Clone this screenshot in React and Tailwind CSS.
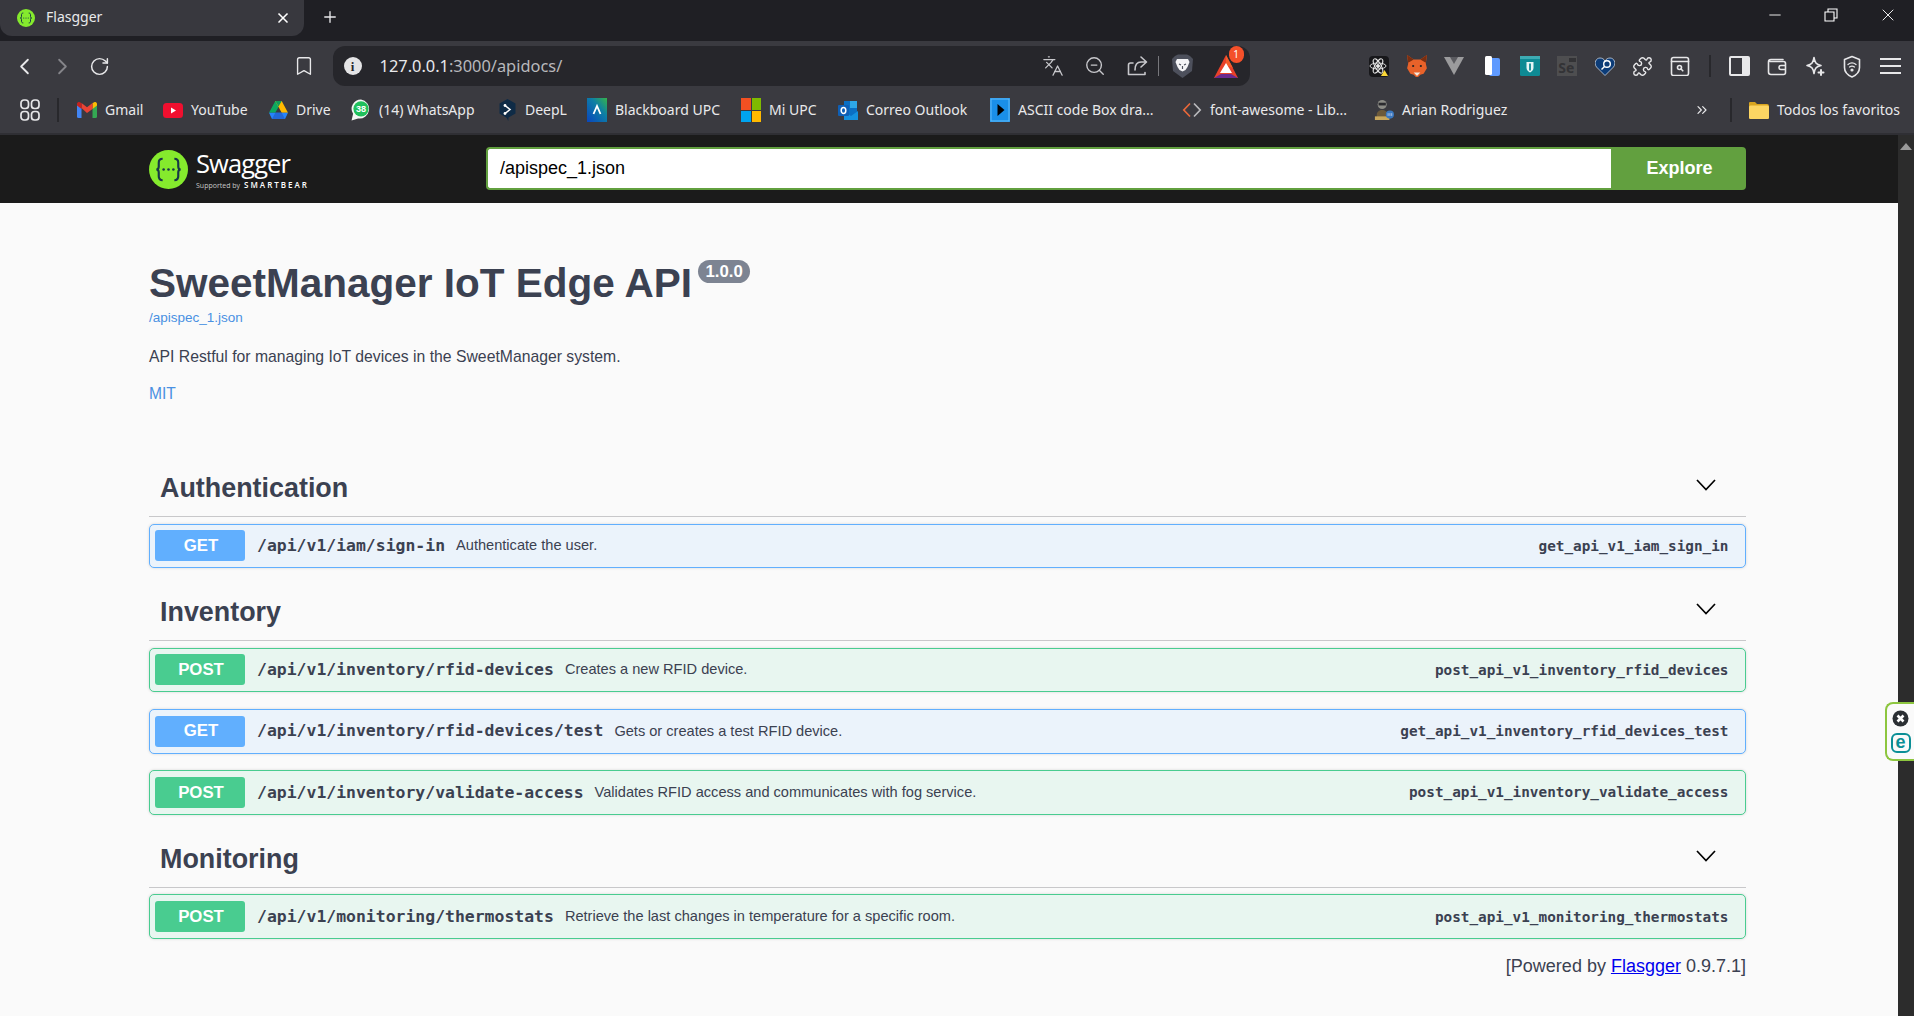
import React from "react";
import { ChevronLeft, ChevronRight, RotateCw, Bookmark, Languages, ZoomOut, Puzzle, X, Plus, Minus, ChevronsRight } from "lucide-react";

const Gmail = () => (<svg width="20" height="16" viewBox="0 0 20 16" fill="none"><path d="M0 2v12.5A1.5 1.5 0 0 0 1.5 16H4.500V6z" fill="#4285f4"/><path d="M20 2v12.500A1.500 1.500 0 0 1 18.500 16H15.500V6z" fill="#34a853"/><path d="M15.500 1v6l4.500-3.500V2c0-1.800-2-2.600-3.200-1.600z" fill="#fbbc04"/><path d="M4.500 6V1L10 5.200 15.500 1v6L10 11z" fill="#ea4335"/><path d="M0 2v1.500L4.500 7V1L3.200.4C2-.6 0 .2 0 2z" fill="#c5221f"/></svg>);
const YouTube = () => (<svg width="20" height="15" viewBox="0 0 20 15"><rect width="20" height="15" rx="3.500" fill="#f00f2f"/><path d="M8 4.500v6l5-3z" fill="#fff"/></svg>);
const Drive = () => (<svg width="19" height="18" viewBox="0 0 19 18"><path d="M6.300 0h6.400l-3.100 5.800-3.300 6H0z" fill="#0da960"/><path d="M6.300 0h6.400l6.300 11.800h-6.300z" fill="#ffba00"/><path d="M3 18h13l3-6.200H0z" fill="#2684fc"/><path d="M6.300 11.800h6.400L16 18H3z" fill="#2268d8"/><path d="M6.300 0h6.400L9.500 5.600z" fill="#0f9d58"/></svg>);
const WhatsApp = () => (<svg width="21" height="24" viewBox="0 0 21 24"><path d="M10.500 1a9.800 9.800 0 0 0-8.300 15L.6 23l6.800-2.200A9.800 9.800 0 1 0 10.500 1z" fill="#f4f6f4"/><circle cx="10.500" cy="10.800" r="8" fill="#20c05c"/><text x="10.500" y="14" textAnchor="middle" fontSize="9.500" fontWeight="700" fill="#fff" fontFamily="Liberation Sans, sans-serif">38</text></svg>);
const DeepL = () => (<svg width="17" height="22" viewBox="0 0 17 22"><path d="M8.500 0l8 4.500v10l-7 4-.2 3.500-1.800-3.300-7-4.200v-10z" fill="#0f2b46"/><path d="M6 6.500l5 4-5 4" fill="none" stroke="#fff" strokeWidth="1.600"/><circle cx="6" cy="6.500" r="1.400" fill="#fff"/><circle cx="6" cy="14.500" r="1.400" fill="#fff"/></svg>);
const Blackboard = () => (<svg width="20" height="24" viewBox="0 0 20 24"><defs><linearGradient id="bb" x1="1" y1="0" x2="0" y2="1"><stop offset="0" stopColor="#36b34a"/><stop offset="0.4" stopColor="#0d7fa5"/><stop offset="1" stopColor="#0a45bd"/></linearGradient></defs><rect width="20" height="24" fill="url(#bb)"/><path d="M6.500 16l3.500-8 3.500 8" fill="none" stroke="#fff" strokeWidth="1.800"/></svg>);
const MS = () => (<div className="grid w-[20px] h-[24px] grid-cols-2 grid-rows-2 gap-[1px]"><div className="bg-[#f25022]"/><div className="bg-[#7fba00]"/><div className="bg-[#00a4ef]"/><div className="bg-[#ffb900]"/></div>);
const Outlook = () => (<svg width="20" height="21" viewBox="0 0 20 21"><rect x="6" y="1" width="13" height="15" fill="#0a6fc4"/><rect x="12" y="1" width="7" height="7" fill="#2ea8e8"/><path d="M6 11l7 5 7-5v9H6z" fill="#1490df"/><rect y="5" width="11" height="11" rx="1" fill="#0f5fb5"/><ellipse cx="5.500" cy="10.500" rx="2.300" ry="3" fill="none" stroke="#fff" strokeWidth="1.500"/></svg>);
const Ascii = () => (<svg width="20" height="24" viewBox="0 0 20 24"><rect width="20" height="24" fill="#1a8fe8"/><rect x="1" y="1" width="18" height="22" fill="none" stroke="#62bcf7"/><path d="M7.500 6l7 6-7 6z" fill="#000"/></svg>);
const Fa = () => (<svg width="20" height="16" viewBox="0 0 20 16" fill="none" strokeWidth="1.700"><path d="M8 1.500L1.800 8 8 14.500" stroke="#e8683a"/><path d="M12 1.500L18.200 8 12 14.500" stroke="#b9b9bc"/></svg>);
const Person = () => (<svg width="22" height="24" viewBox="0 0 22 24"><circle cx="9" cy="6" r="5" fill="#8c8c86"/><rect x="5" y="4" width="8" height="3" fill="#2a2a2e"/><path d="M3 23v-6c0-3 3-5 6-5s6 2 6 5v6z" fill="#6d5a3a"/><rect x="1" y="19" width="16" height="4" fill="#c9a75c"/><circle cx="17.500" cy="17" r="4.500" fill="#3a78c0"/><path d="M15.500 15.500v3M17.500 15.500v3M19.500 15.500v3" stroke="#dde" strokeWidth=".8"/></svg>);
const Folder = () => (<svg width="20" height="18" viewBox="0 0 20 18"><path d="M0 2a1 1 0 0 1 1-1h5l2 2h10a2 2 0 0 1 2 2v11a2 2 0 0 1-2 2H2a2 2 0 0 1-2-2z" fill="#d9a520"/><rect y="4.500" width="20" height="13.500" rx="1.500" fill="#fdd663"/></svg>);
const Apps = () => (<svg width="20" height="22" viewBox="0 0 20 22" fill="none" stroke="#e6e6e8" strokeWidth="1.700"><rect x="1" y="1" width="7.500" height="8.500" rx="3"/><rect x="11.500" y="1" width="7.500" height="8.500" rx="3"/><rect x="1" y="12.500" width="7.500" height="8.500" rx="3"/><rect x="11.500" y="12.500" width="7.500" height="8.500" rx="3"/></svg>);

const SwaggerIcon = ({ size = 39 }) => (
  <svg width={size} height={size} viewBox="0 0 40 40">
    <circle cx="20" cy="20" r="20" fill="#85ea2d" />
    <path d="M14 9c-3.500 0-4 2-4 4v4c0 2-1 3-2.500 3 1.500 0 2.500 1 2.500 3v4c0 2 .5 4 4 4M26 9c3.500 0 4 2 4 4v4c0 2 1 3 2.500 3-1.500 0-2.500 1-2.500 3v4c0 2-.5 4-4 4" fill="none" stroke="#173647" strokeWidth="2.200" />
    <circle cx="15" cy="20" r="1.300" fill="#173647" /><circle cx="20" cy="20" r="1.300" fill="#173647" /><circle cx="25" cy="20" r="1.300" fill="#173647" />
  </svg>
);

const Lion = () => (<svg width="21" height="24" viewBox="0 0 21 24"><path d="M3 2l3-1.500h9L18 2l3 3-1 12-9.500 7L1 17 0 5z" fill="#4d505c"/><path d="M5 5h11l1.500 3-2 5-2 3-3 1.500L7.500 16l-2-3-2-5z" fill="#f4f4f6"/><path d="M7 10l2 1M14 10l-2 1M10.500 12v3" stroke="#4d505c" strokeWidth="1.200"/></svg>);
const Triangle = () => (<svg width="24" height="24" viewBox="0 0 24 24"><path d="M12 1L0 24h24z" fill="#e8412a"/><path d="M12 1l7 13-7-3z" fill="#f55d2a"/><path d="M0 24l7-4h10l7 4z" fill="#6a2a8e"/><path d="M12 9l6 10H6z" fill="#fff"/></svg>);

const ReactExt = () => (<div className="relative w-[20px] h-[21px] bg-[#17171a] rounded-sm"><svg width="20" height="21" viewBox="0 0 20 21" fill="none" stroke="#e8e8e8" strokeWidth=".9"><ellipse cx="9" cy="10" rx="8" ry="3"/><ellipse cx="9" cy="10" rx="8" ry="3" transform="rotate(60 9 10)"/><ellipse cx="9" cy="10" rx="8" ry="3" transform="rotate(120 9 10)"/><circle cx="9" cy="10" r="1.500" fill="#e8e8e8"/><path d="M12 20l3.500-6 3.500 6z" fill="#fbd838" stroke="none"/></svg></div>);
const Fox = () => (<svg width="22" height="22" viewBox="0 0 20 20"><path d="M1 0l6 4h6l6-4-1 8 1 4-3 5-3 1-3 3-3-3-3-1-3-5 1-4z" fill="#e8622a"/><path d="M1 0l6 4-5 3zM19 0l-6 4 5 3z" fill="#7a2e10"/><path d="M7 16h6l-3 3z" fill="#f5e8dc"/><circle cx="6.500" cy="10" r="1" fill="#222"/><circle cx="13.500" cy="10" r="1" fill="#222"/></svg>);
const Vue = () => (<svg width="20" height="18" viewBox="0 0 20 18"><path d="M0 0h20L10 18z" fill="#9b9b9d"/><path d="M6 0h8l-4 7z" fill="#5b5b60"/></svg>);
const Files = () => (<svg width="15" height="20" viewBox="0 0 15 20"><rect x="4" y="2" width="11" height="18" rx="2" fill="#5f9aff"/><rect width="7" height="19" rx="1.500" fill="#fff"/></svg>);
const Bitwarden = () => (<svg width="20" height="20" viewBox="0 0 20 20"><rect width="20" height="20" rx="1.500" fill="#0e8a94"/><rect width="20" height="3" fill="#3dabb3"/><path d="M6.500 6h7v6c0 2-2 4-3.500 4.500C8.500 16 6.500 14 6.500 12z" fill="#e6f5f6"/><path d="M10 7.500v7" stroke="#0e8a94" strokeWidth="1.800"/></svg>);
const Selenium = () => (<div className="relative w-[20px] h-[20px] bg-[#4e4e50] text-[#333336] text-[14px] leading-[24px] font-bold pl-[1px] font-['Noto_Sans',sans-serif]">Se<span className="absolute right-[1px] top-[2px] w-[7px] h-[4px] bg-[#333336]"/></div>);
const Heart = () => (<svg width="20" height="19" viewBox="0 0 20 19"><path d="M10 18.500L1.500 10C-1.500 6 1 1 5 1c2 0 4 1 5 3 1-2 3-3 5-3 4 0 6.500 5 3.500 9z" fill="#0c3c78" stroke="#dde6f2" strokeWidth=".7"/><circle cx="12" cy="7" r="3.300" fill="none" stroke="#fff" strokeWidth="1.400"/><path d="M9.500 9.500L6.500 12.500" stroke="#fff" strokeWidth="1.400"/></svg>);
const Stroke = ({ children, w = 20, h = 20 }) => (<svg width={w} height={h} viewBox={`0 0 ${w} ${h}`} fill="none" stroke="#e6e6e8" strokeWidth="1.600" strokeLinecap="round" strokeLinejoin="round">{children}</svg>);

const Ext = ({ children }) => <div className="w-[37.6px] flex justify-center items-center">{children}</div>;
const Nav = ({ children, className = "" }) => <div className={`flex justify-center items-center ${className}`}>{children}</div>;

const Mark = ({ icon, label, className = "" }) => (
  <div className={`flex items-center gap-[8px] shrink-0 ${className}`}>
    <div className="w-[20px] flex justify-center">{icon}</div>
    <span className="text-[14px] whitespace-nowrap text-[#e9e9eb] leading-none">{label}</span>
  </div>
);

const Section = ({ title, children }) => (
  <section className="mt-[14px]">
    <div className="h-[59px] border-b border-b-[#c8c8ca] flex items-center justify-between pl-[11px] pr-[30px]">
      <h3 className="pt-[2px] text-[26.9px] font-bold text-[#3b4151] leading-none">{title}</h3>
      <svg className="mb-[4px]" width="20" height="12" viewBox="0 0 20 12" fill="none" stroke="#000" strokeWidth="1.700"><path d="M1 1l9 9.500L19 1" /></svg>
    </div>
    <div className="pt-[6.5px]">{children}</div>
  </section>
);

const Op = ({ method, path, summary, id }) => {
  const post = method === "POST";
  return (
    <div className={`h-[44.6px] mb-[16.8px] last:mb-0 flex items-center rounded-[5px] border-[1.5px] pl-[5px] pr-[16.5px] shadow-[0_0_3px_rgba(0,0,0,0.15)] ${post ? "bg-[#e8f6f0] border-[#49cc90]" : "bg-[#ebf3fb] border-[#61affe]"}`}>
      <div className={`w-[90px] h-[31px] pl-[2px] pb-[1px] rounded-[3px] flex items-center justify-center text-white font-bold text-[16.8px] ${post ? "bg-[#49cc90]" : "bg-[#61affe]"}`}>{method}</div>
      <span className="ml-[12px] pt-[1px] font-['DejaVu_Sans_Mono',monospace] font-bold text-[16.45px] text-[#3b4151] whitespace-nowrap">{path}</span>
      <span className="ml-[11px] pt-[1px] text-[14.6px] text-[#3b4151] whitespace-nowrap">{summary}</span>
      <span className="ml-auto pt-[1px] font-['DejaVu_Sans_Mono',monospace] font-bold text-[14.35px] text-[#3b4151] whitespace-nowrap">{id}</span>
    </div>
  );
};

export default function App() {
  return (
    <div className="relative w-[1914px] h-[1016px] overflow-hidden bg-[#fafafa] font-['Liberation_Sans',sans-serif]">
      <header className="font-['Noto_Sans',sans-serif]">
        <div className="h-[41px] bg-[#1f1f24] flex">
          <div className="w-[304px] h-[36px] bg-[#38383e] rounded-b-[12px] flex items-center">
            <div className="ml-[17px]"><SwaggerIcon size={18} /></div>
            <span className="ml-[11px] pb-[3px] text-[14px] text-[#e9e9eb] leading-none">Flasgger</span>
            <X className="ml-auto mr-[13px]" size={16} strokeWidth={2.500} color="#fff" />
          </div>
          <Plus className="ml-[17px] mt-[8px]" size={18} strokeWidth={1.800} color="#e8e8ea" />
          <div className="ml-auto flex h-[30px] items-center">
            <Minus size={18} strokeWidth={1.200} color="#fff" />
            <div className="ml-[40px]"><Stroke w={14} h={14}><path d="M1 4h9v9H1zM4 4V1h9v9h-3" strokeWidth="1.100" strokeLinecap="butt" strokeLinejoin="miter" stroke="#fff"/></Stroke></div>
            <X className="ml-[40px] mr-[16px]" size={20} strokeWidth={1.100} color="#fff" />
          </div>
        </div>
        <div className="h-[49px] pt-[1px] bg-[#3a3a40] flex items-center pl-[6px]">
          <Nav className="w-[37.500px]"><ChevronLeft size={27} strokeWidth={1.600} color="#e8e8ea" /></Nav>
          <Nav className="w-[37.500px]"><ChevronRight size={27} strokeWidth={1.600} color="#85858a" /></Nav>
          <Nav className="w-[37.500px]"><RotateCw size={21} strokeWidth={1.700} color="#e8e8ea" /></Nav>
          <Nav className="w-[38px] ml-[166px]"><Bookmark size={22} strokeWidth={1.500} color="#e8e8ea" /></Nav>
          <div className="ml-[10px] w-[917px] h-[40px] rounded-[12px] bg-[#26262b] flex items-center">
            <div className="ml-[11px] w-[18px] h-[18px] rounded-full bg-[#e4e4e6] flex items-center justify-center text-[#26262b] text-[13px] font-bold leading-none font-['Liberation_Serif',serif]">i</div>
            <span className="ml-[18px] text-[16.4px] text-[#e9e9eb] leading-none whitespace-nowrap">127.0.0.1<span className="text-[#b8b8bc]">:3000/apidocs/</span></span>
            <div className="ml-auto flex items-center pr-[5px]">
              <Nav className="w-[42px]"><Languages size={22} strokeWidth={1.400} color="#c8c8cc" /></Nav>
              <Nav className="w-[42px]"><ZoomOut size={22} strokeWidth={1.500} color="#c8c8cc" /></Nav>
              <Nav className="w-[42px]"><Stroke w={22} h={22}><path d="M7 8H4.500A2 2 0 0 0 2.500 10v9.500h16.500v-2M19 7h-4c-4 0-6 3-6 8M15 2l5.500 5-5.500 5" stroke="#c8c8cc"/></Stroke></Nav>
              <div className="w-[1px] h-[20px] bg-[#77777c]" />
              <Nav className="w-[48px]"><Lion /></Nav>
              <div className="relative w-[38px] flex justify-center">
                <Triangle />
                <span className="absolute right-[1px] top-[-8px] w-[15px] h-[17px] rounded-full bg-[#f4502a] text-white text-[10px] leading-[17px] text-center">1</span>
              </div>
            </div>
          </div>
          <div className="ml-[111px] flex items-center">
            <Ext><ReactExt /></Ext><Ext><Fox /></Ext><Ext><Vue /></Ext><Ext><Files /></Ext><Ext><Bitwarden /></Ext><Ext><Selenium /></Ext><Ext><Heart /></Ext>
            <Ext><Puzzle size={21} strokeWidth={1.600} color="#e8e8ea" /></Ext>
            <Ext><Stroke><rect x="1.500" y="1.500" width="17" height="18" rx="2"/><path d="M1.500 5.500h17"/><circle cx="9.500" cy="11.500" r="2" /><path d="M11 13l1.800 1.800"/></Stroke></Ext>
            <div className="w-[22px] flex justify-center"><div className="w-[2px] h-[22px] bg-[#28282c]" /></div>
            <Ext><div className="w-[21px] h-[20px] rounded-[2px] border-2 border-[#e8e8ea] flex justify-end"><div className="w-[6px] bg-[#e8e8ea]" /></div></Ext>
            <Ext><Stroke><path d="M16 3.500H4A2.500 2.500 0 0 0 1.500 6v10A2.500 2.500 0 0 0 4 18.500h12.500a2 2 0 0 0 2-2v-9a2 2 0 0 0-2-2H3M18.500 9.500H14a2 2 0 0 0 0 4h4.500"/></Stroke></Ext>
            <Ext><Stroke><path d="M10 1.500c.8 5 2 7 7 8-5 1-6.200 3-7 8-.8-5-2-7-7-8 5-1 6.200-3 7-8z" transform="translate(-1 0)"/><path d="M16 14v5M13.500 16.500h5" strokeWidth="2"/></Stroke></Ext>
            <Ext><Stroke w={18} h={23}><path d="M9 1.500l7.500 3v8c0 5-4 8-7.500 9.500-3.500-1.500-7.500-4.500-7.500-9.500v-8z"/><path d="M5 9.500c2.500-2 5.500-2 8 0M6.500 12c1.500-1 3.500-1 5 0" strokeWidth="1.300"/><circle cx="9" cy="15" r=".8" fill="#e6e6e8"/></Stroke></Ext>
            <Ext><div className="w-[21px] flex flex-col gap-[5.500px]"><div className="h-[1.500px] bg-[#e8e8ea]"/><div className="h-[1.500px] bg-[#e8e8ea]"/><div className="h-[1.500px] bg-[#e8e8ea]"/></div></Ext>
          </div>
        </div>
        <div className="h-[45px] pb-[3px] bg-[#3a3a40] border-b-2 border-b-[#2f2f34] flex items-center pl-[20px]">
          <Apps />
          <div className="ml-[17px] w-[2px] h-[24px] bg-[#28282c]" />
          <div className="ml-[18px] flex items-center">
            <Mark icon={<Gmail />} label="Gmail" className="w-[86px]" />
            <Mark icon={<YouTube />} label="YouTube" className="w-[105px]" />
            <Mark icon={<Drive />} label="Drive" className="w-[83px]" />
            <Mark icon={<WhatsApp />} label="(14) WhatsApp" className="w-[146px]" />
            <Mark icon={<DeepL />} label="DeepL" className="w-[90px]" />
            <Mark icon={<Blackboard />} label="Blackboard UPC" className="w-[154px]" />
            <Mark icon={<MS />} label="Mi UPC" className="w-[97px]" />
            <Mark icon={<Outlook />} label="Correo Outlook" className="w-[152px]" />
            <Mark icon={<Ascii />} label="ASCII code Box dra..." className="w-[192px]" />
            <Mark icon={<Fa />} label="font-awesome - Lib..." className="w-[192px]" />
            <Mark icon={<Person />} label="Arian Rodriguez" className="w-[320px]" />
          </div>
          <ChevronsRight size={16} strokeWidth={1.800} color="#e8e8ea" />
          <div className="ml-[20px] w-[2px] h-[24px] bg-[#28282c]" />
          <div className="ml-[17px]"><Mark icon={<Folder />} label="Todos los favoritos" /></div>
        </div>
      </header>

      <div className="flex h-[881px]">
        <main className="w-[1898px]">
          <div className="h-[68px] bg-[#1b1b1b] pl-[149px] flex items-center">
            <div className="w-[337px] flex items-center">
              <SwaggerIcon />
              <div className="ml-[8px] text-white font-['Open_Sans',sans-serif]">
                <div className="text-[25.5px] leading-[28px] tracking-[-0.9px]">Swagger</div>
                <div className="flex items-baseline leading-none mt-[4px] whitespace-nowrap">
                  <span className="text-[7px] text-[#c8c8c8]">Supported by</span>
                  <span className="ml-[4px] text-[8px] font-semibold tracking-[2px]">SMARTBEAR</span>
                </div>
              </div>
            </div>
            <div className="w-[1260px] h-[43px] mb-[1px] flex">
              <div className="flex-1 bg-white border-2 border-[#62a03f] border-r-0 rounded-l-[4px] flex items-center pl-[12px] text-[18px] text-[#000]">/apispec_1.json</div>
              <div className="w-[135px] pl-[2px] bg-[#62a03f] rounded-r-[4px] flex items-center justify-center text-white font-bold text-[18px]">Explore</div>
            </div>
          </div>

          <div className="ml-[149px] w-[1597px]">
            <div className="pt-[57px] h-[241px]">
              <div className="flex items-start h-[46px]">
                <h1 className="text-[40.500px] font-bold text-[#3b4151] leading-[46px] whitespace-nowrap">SweetManager IoT Edge API</h1>
                <span className="ml-[6px] w-[52px] h-[23px] rounded-full bg-[#7d8492] text-white font-bold text-[16.800px] leading-[23px] text-center">1.0.0</span>
              </div>
              <div className="text-[13.500px] text-[#4990e2] leading-[18px] mt-[2.5px]">/apispec_1.json</div>
              <p className="text-[15.750px] text-[#3b4151] leading-[22px] mt-[19px]">API Restful for managing IoT devices in the SweetManager system.</p>
              <div className="text-[15.600px] text-[#4990e2] leading-[22px] mt-[15.5px]">MIT</div>
            </div>
            <Section title="Authentication">
              <Op method="GET" path="/api/v1/iam/sign-in" summary="Authenticate the user." id="get_api_v1_iam_sign_in" />
            </Section>
            <Section title="Inventory">
              <Op method="POST" path="/api/v1/inventory/rfid-devices" summary="Creates a new RFID device." id="post_api_v1_inventory_rfid_devices" />
              <Op method="GET" path="/api/v1/inventory/rfid-devices/test" summary="Gets or creates a test RFID device." id="get_api_v1_inventory_rfid_devices_test" />
              <Op method="POST" path="/api/v1/inventory/validate-access" summary="Validates RFID access and communicates with fog service." id="post_api_v1_inventory_validate_access" />
            </Section>
            <Section title="Monitoring">
              <Op method="POST" path="/api/v1/monitoring/thermostats" summary="Retrieve the last changes in temperature for a specific room." id="post_api_v1_monitoring_thermostats" />
            </Section>
            <div className="mt-[16px] text-right text-[18px] leading-[22px] text-[#3b4151]">[Powered by <span className="text-[#0000ee] underline">Flasgger</span> 0.9.7.1]</div>
          </div>
        </main>
        <div className="w-[16px] bg-[#2c2c2c] flex justify-center pt-[8px]">
          <div className="w-0 h-0 border-x-[6px] border-x-transparent border-b-[7px] border-b-[#9a9a9a]" />
        </div>
      </div>

      <div className="absolute left-[1885px] top-[702px] w-[29px] h-[59px] bg-[#fafafa] border-[2.500px] border-r-0 border-[#8dc63f] rounded-l-[8px] flex flex-col items-center pt-[6px] gap-[6px]">
        <svg width="17" height="17" viewBox="0 0 17 17"><circle cx="8.500" cy="8.500" r="8" fill="#2b2f33"/><path d="M5.500 5.500l6 6M11.500 5.500l-6 6" stroke="#fff" strokeWidth="2.600"/></svg>
        <div className="w-[20px] h-[20px] rounded-[6px] border-2 border-[#0b8f96] text-[#0b8f96] font-bold text-[18px] leading-[15px] text-center">e</div>
      </div>
    </div>
  );
}
